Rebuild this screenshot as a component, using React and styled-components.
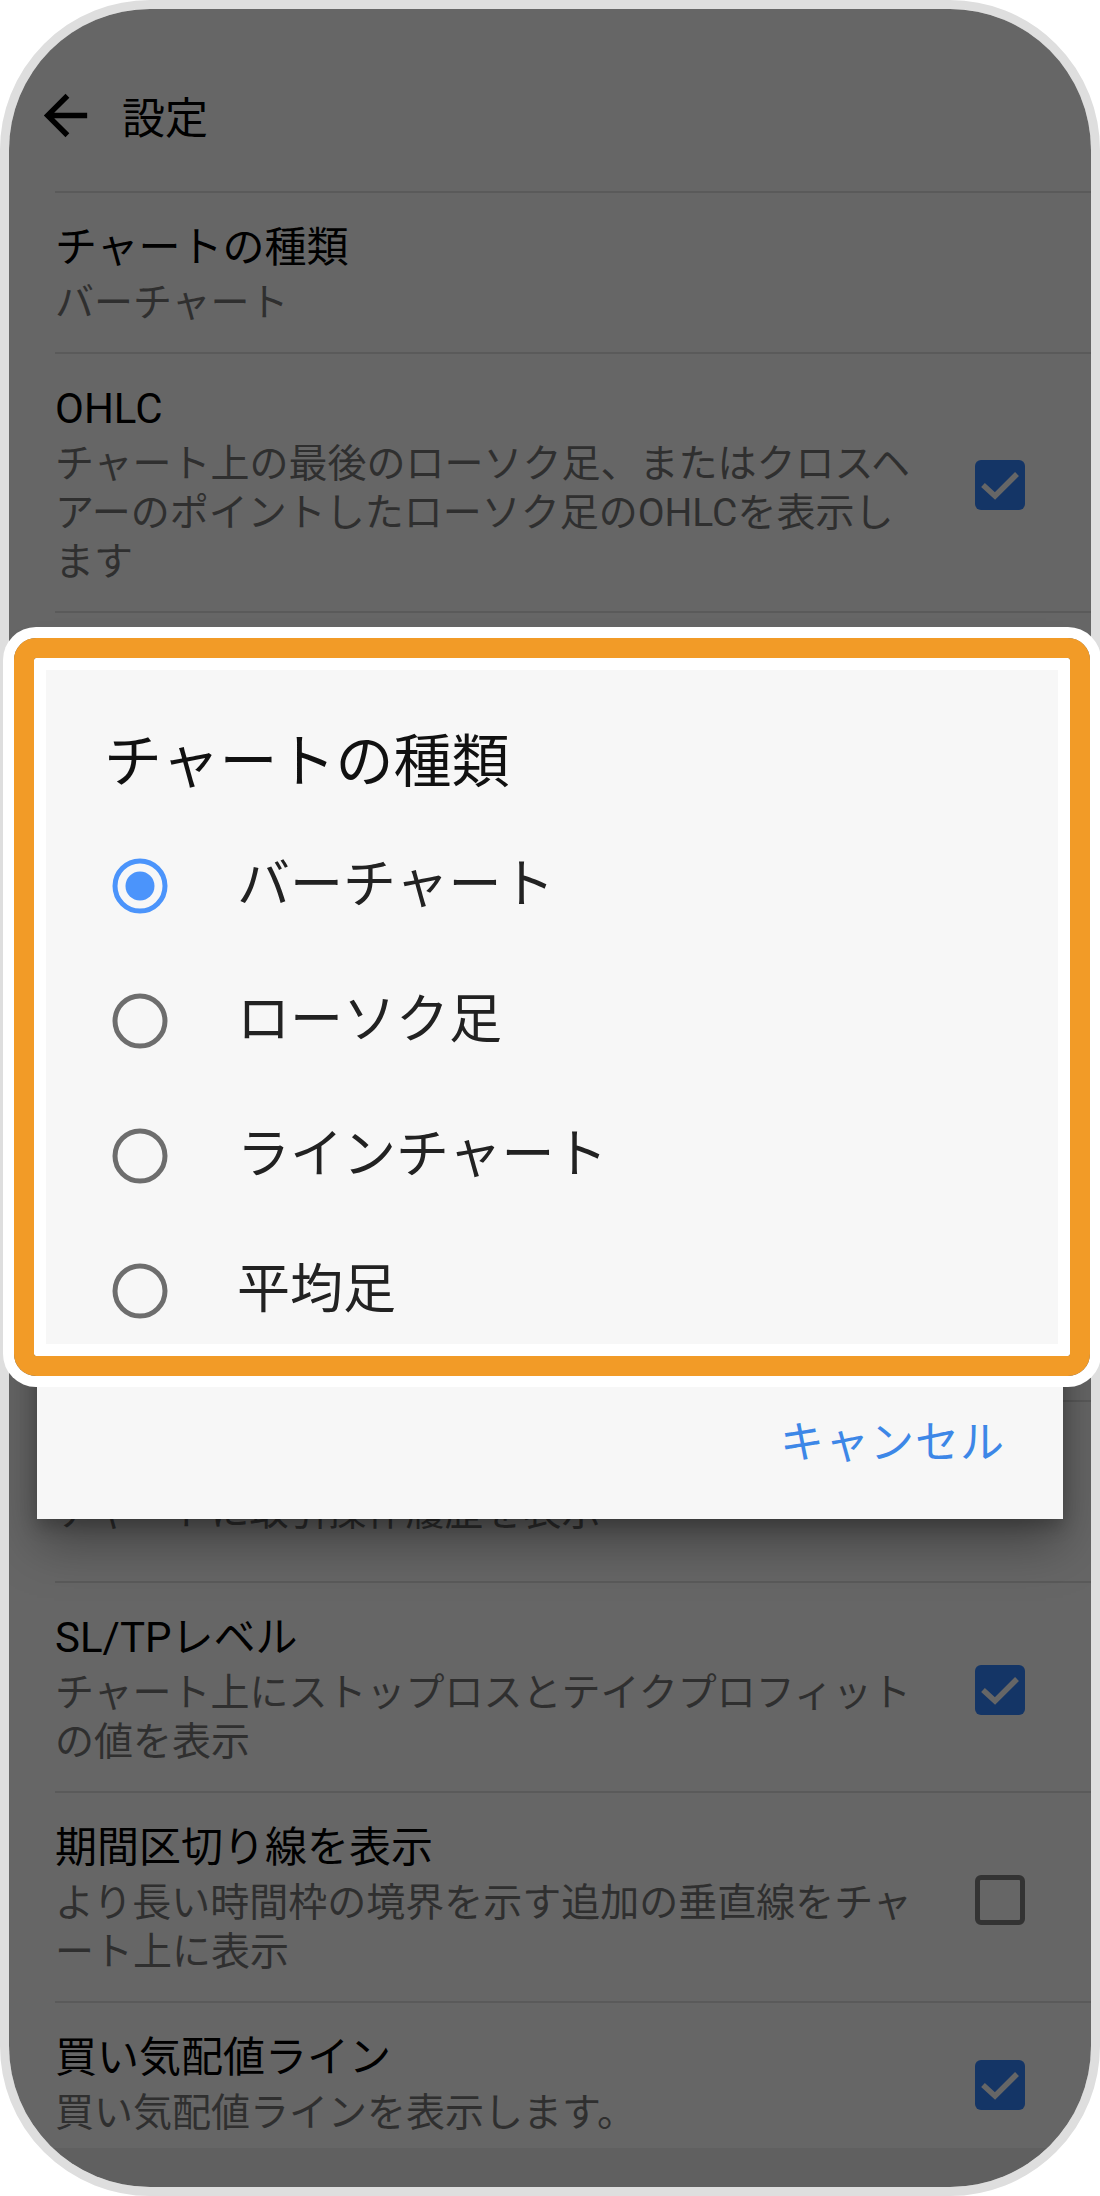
import React from 'react';
import styled, { createGlobalStyle } from 'styled-components';

const GlobalStyle = createGlobalStyle`
  html, body {
    margin: 0;
    padding: 0;
    background: #fff;
  }
  body {
    font-family: Roboto, "Noto Sans CJK JP", sans-serif;
  }
  ul {
    margin: 0;
    padding: 0;
    list-style: none;
  }
`;

const Frame = styled.div`
  position: relative;
  box-sizing: border-box;
  width: 1100px;
  height: 2196px;
  border: 9px solid #dedede;
  border-radius: 150px;
  background: #fff;
`;

const Screen = styled.div`
  position: relative;
  height: 100%;
  border-radius: 141px;
  overflow: hidden;
  display: flex;
  flex-direction: column;
  background: #fff;
`;

const Toolbar = styled.header`
  display: flex;
  align-items: center;
  gap: 24px;
  height: 56px;
  padding: 78px 0 48px 24px;
`;

const ToolbarTitle = styled.h1`
  margin: 0;
  font-size: 43px;
  font-weight: 400;
  color: #000;
`;

const List = styled.ul`
  flex: 1;
  min-height: 0;
  overflow: hidden;
`;

const Divider = styled.li`
  height: 2px;
  margin-left: 46px;
  background: #e0e0e0;
`;

const Category = styled.li`
  margin-left: 46px;
  padding: 76px 0 25px;
  font-size: 34px;
  line-height: 44px;
  color: #3284ff;
`;

const Pref = styled.li`
  display: flex;
  align-items: center;
  gap: 54px;
  margin-left: 46px;
  padding: 29px 66px ${p => (p.$roomy ? '44px' : '24px')} 0;
  border-bottom: 2px solid #e0e0e0;
`;

const PrefText = styled.div`
  flex: 1;
  min-width: 0;
`;

const PrefTitle = styled.div`
  font-size: 42px;
  line-height: 52px;
  color: #000;
`;

const PrefSummary = styled.div`
  margin-top: 5px;
  font-size: 39px;
  line-height: 49px;
  color: #777;
  line-break: loose;
`;

const Box = styled.span`
  flex-shrink: 0;
  box-sizing: border-box;
  width: 50px;
  height: 50px;
  border-radius: 6px;
  display: flex;
  align-items: center;
  justify-content: center;
  background: ${p => (p.$checked ? '#3284ff' : 'transparent')};
  border: ${p => (p.$checked ? 'none' : '5px solid #808080')};
`;

const NavBar = styled.div`
  height: 39px;
  flex-shrink: 0;
  background: #f0f0f0;
`;

const Scrim = styled.div`
  position: absolute;
  inset: 0;
  background: rgba(0, 0, 0, 0.6);
`;

const Dialog = styled.div`
  position: absolute;
  top: 643px;
  left: 28px;
  width: 1026px;
  padding-top: 74px;
  background: #f7f7f7;
  box-shadow: 0 24px 48px rgba(0, 0, 0, 0.35), 0 8px 16px rgba(0, 0, 0, 0.2);
`;

const DialogTitle = styled.h2`
  margin: 0 0 20px;
  padding-left: 67px;
  font-size: 58px;
  line-height: 72px;
  font-weight: 400;
  color: #111;
`;

const Option = styled.li`
  display: flex;
  align-items: center;
  gap: 67px;
  height: 135px;
  padding-left: 73px;
  font-size: 53px;
  line-height: 1;
  color: #222;
`;

const ButtonBar = styled.div`
  display: flex;
  align-items: center;
  justify-content: flex-end;
  height: 161px;
  padding-right: 58px;
`;

const TextButton = styled.button`
  border: none;
  background: none;
  padding: 0;
  font-family: inherit;
  font-size: 44px;
  letter-spacing: 1px;
  color: #3d87e7;
`;

const Highlight = styled.div`
  position: absolute;
  left: 5px;
  top: 629px;
  box-sizing: border-box;
  width: 1076px;
  height: 738px;
  border: 20px solid #f29b27;
  border-radius: 22px;
  box-shadow: 0 0 0 11px #fff, inset 0 0 0 12px #fff;
  pointer-events: none;
`;

const BackArrow = () => (
  <svg width="65" height="65" viewBox="0 0 24 24" fill="#000">
    <path d="M20 11H7.83l5.59-5.59L12 4l-8 8 8 8 1.41-1.41L7.83 13H20v-2z" />
  </svg>
);

const Checkbox = ({ checked }) => (
  <Box $checked={checked}>
    {checked && (
      <svg width="50" height="50" viewBox="0 0 50 50" fill="none">
        <path d="M8 25l12 11 22-22" stroke="#fff" strokeWidth="5.5" />
      </svg>
    )}
  </Box>
);

const Radio = ({ checked }) => (
  <svg width="60" height="60" viewBox="0 0 60 60">
    <circle
      cx="30"
      cy="30"
      r="25"
      fill="none"
      stroke={checked ? '#4b94fb' : '#6d6d6d'}
      strokeWidth="5"
    />
    {checked && <circle cx="30" cy="30" r="14.5" fill="#4b94fb" />}
  </svg>
);

const prefs = [
  { title: 'チャートの種類', summary: 'バーチャート' },
  {
    title: 'OHLC',
    summary:
      'チャート上の最後のローソク足、またはクロスヘアーのポイントしたローソク足のOHLCを表示します',
    checked: true,
  },
  { category: '表示' },
  { title: 'グリッド', summary: 'チャート上にグリッドを表示', checked: false },
  { title: 'ボリューム', summary: 'ティックボリュームを表示', checked: true },
  { title: '取引レベル', summary: '未決注文のレベルを表示', checked: true },
  { title: 'データウィンドウ', summary: 'データウィンドウを表示', checked: false },
  { title: '取引履歴', summary: 'チャートに取引操作履歴を表示', checked: true, roomy: true },
  {
    title: 'SL/TPレベル',
    summary: 'チャート上にストップロスとテイクプロフィットの値を表示',
    checked: true,
  },
  {
    title: '期間区切り線を表示',
    summary: 'より長い時間枠の境界を示す追加の垂直線をチャート上に表示',
    checked: false,
  },
  { title: '買い気配値ライン', summary: '買い気配値ラインを表示します。', checked: true },
];

const chartTypes = ['バーチャート', 'ローソク足', 'ラインチャート', '平均足'];

export default function App() {
  return (
    <>
      <GlobalStyle />
      <Frame lang="ja">
        <Screen>
          <Toolbar>
            <BackArrow />
            <ToolbarTitle>設定</ToolbarTitle>
          </Toolbar>
          <List>
            <Divider />
            {prefs.map((p, i) =>
              p.category ? (
                <Category key={i}>{p.category}</Category>
              ) : (
                <Pref key={i} $roomy={p.roomy}>
                  <PrefText>
                    <PrefTitle>{p.title}</PrefTitle>
                    <PrefSummary>{p.summary}</PrefSummary>
                  </PrefText>
                  {p.checked !== undefined && <Checkbox checked={p.checked} />}
                </Pref>
              )
            )}
          </List>
          <NavBar />
          <Scrim />
          <Dialog>
            <DialogTitle>チャートの種類</DialogTitle>
            <ul>
              {chartTypes.map((t, i) => (
                <Option key={t}>
                  <Radio checked={i === 0} />
                  {t}
                </Option>
              ))}
            </ul>
            <ButtonBar>
              <TextButton>キャンセル</TextButton>
            </ButtonBar>
          </Dialog>
        </Screen>
        <Highlight />
      </Frame>
    </>
  );
}
